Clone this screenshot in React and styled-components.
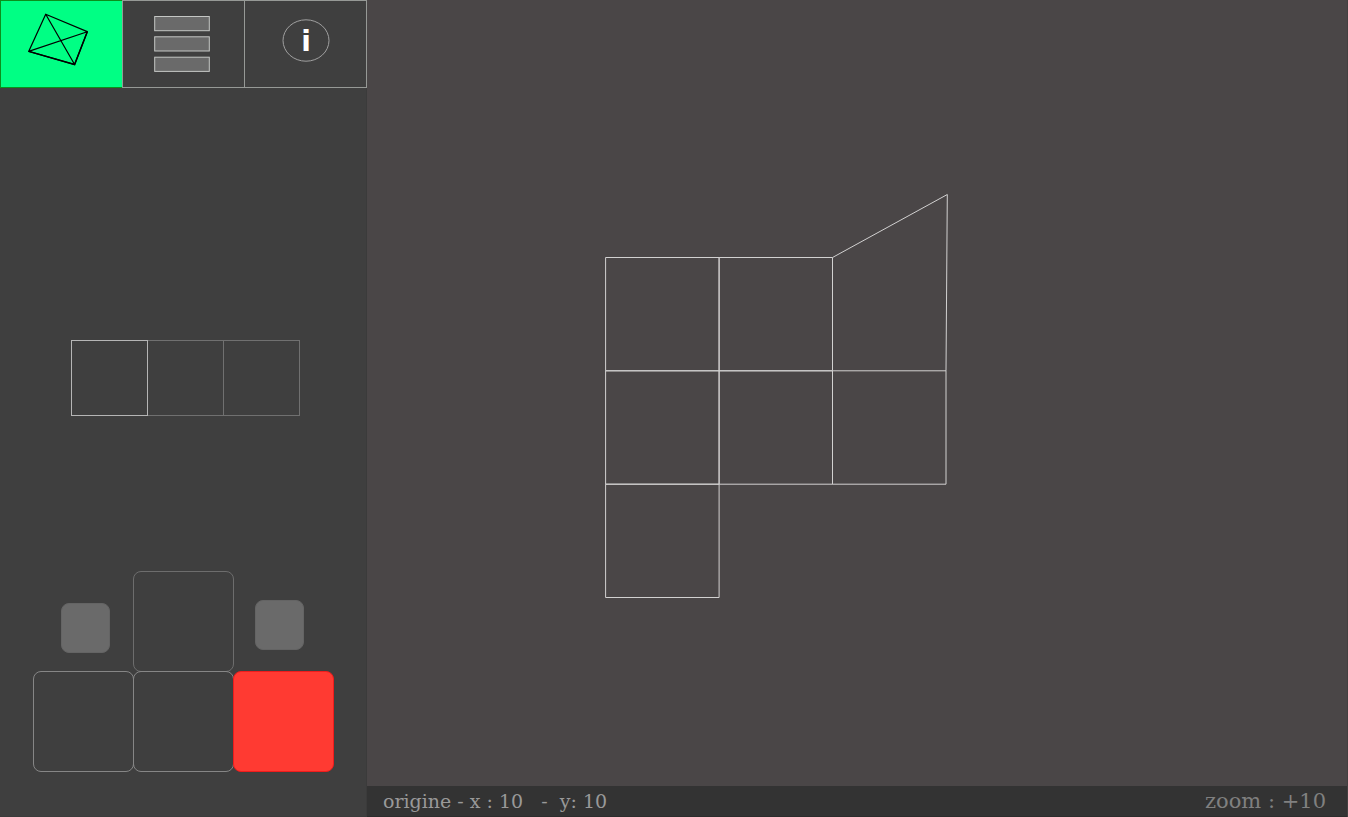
import React, { useState } from "react";
import styled, { createGlobalStyle } from "styled-components";

const GlobalStyle = createGlobalStyle`
  *, *::before, *::after { box-sizing: border-box; }
  body { margin: 0; background: #4a4647; }
  button { appearance: none; padding: 0; margin: 0; font: inherit; cursor: pointer; }
`;

const Page = styled.div`
  display: grid;
  grid-template-columns: 367px minmax(0, 1fr);
  min-height: 100vh;
  font-family: "DejaVu Serif", serif;
`;

const Sidebar = styled.aside`
  display: flex;
  flex-direction: column;
  align-items: center;
  background: #3f3f3f;
  border: 1px solid #3b3b3b;
  border-width: 0 1px 1px 0;
`;

const Tabs = styled.nav`
  align-self: stretch;
  display: grid;
  grid-template-columns: repeat(2, 122px) 1fr;
  height: 88px;
  margin-right: -1px;
`;

const Tab = styled.button`
  display: flex;
  align-items: center;
  justify-content: center;
  background: ${(p) => (p.$active ? "#00ff84" : "transparent")};
  border: 1px solid ${(p) => (p.$active ? "#0b8f1c" : "#969996")};
  border-right-width: ${(p) => (p.$last ? "1px" : "0")};
`;

const InfoLetter = styled.text`
  font-family: "DejaVu Sans", sans-serif;
  font-size: 28px;
  font-weight: 700;
  fill: #ffffff;
`;

const Spacer = styled.div`
  flex: ${(p) => p.$weight} 0 0;
`;

const Shapes = styled.div`
  display: flex;
  padding-left: 4px;
`;

const Shape = styled.button`
  width: ${(p) => (p.$selected ? "77px" : "76px")};
  height: 76px;
  background: transparent;
  border: 1px solid ${(p) => (p.$selected ? "#b5b5b5" : "#707070")};
  border-left-width: ${(p) => (p.$joined ? "0" : "1px")};
`;

const Keypad = styled.div`
  display: grid;
  grid-template-columns: repeat(3, 100px);
  grid-template-rows: repeat(2, 100px);
  margin-bottom: 45px;
`;

const Key = styled.button`
  width: 101px;
  height: 101px;
  border-radius: 8px;
  background: ${(p) => (p.$alert ? "#ff3a32" : "transparent")};
  border: 1px solid ${(p) => (p.$alert ? "#f01c1c" : p.$dim ? "#6d6d6d" : "#868686")};
`;

const SideCell = styled.div`
  display: flex;
  justify-content: ${(p) => (p.$end ? "flex-end" : "flex-start")};
  padding: ${(p) => (p.$end ? "32px 23px 0" : "29px 22px 0")};
`;

const SmallKey = styled.button`
  width: 49px;
  height: 50px;
  border: 1px solid #646464;
  border-radius: 8px;
  background: #6a6a6a;
`;

const Workspace = styled.main`
  display: flex;
  flex-direction: column;
  background: #4a4647;
  border-right: 1px solid #434040;
`;

const Canvas = styled.svg`
  flex: 1;
  width: 100%;
  min-height: 620px;
  display: block;
`;

const StatusBar = styled.footer`
  display: flex;
  align-items: center;
  justify-content: space-between;
  height: 31px;
  padding: 0 21px 0 16px;
  background: #333333;
  border-bottom: 1px solid #2c2c2c;
  line-height: 24px;
  white-space: pre;
`;

const Origin = styled.span`
  font-size: 19px;
  color: #999999;
`;

const Zoom = styled.span`
  font-size: 21px;
  color: #808080;
`;

function MeshIcon() {
  return (
    <svg width="121" height="86" viewBox="0 0 121 86" fill="none" stroke="#000000" strokeWidth="1.2" aria-hidden="true">
      <path d="M44.700 13.300L86.300 30.700L73.600 63.500L27.700 50.400Z M44.700 13.300L73.600 63.500 M27.700 50.400L86.300 30.700" />
      <path d="M86.300 30.700L73.600 63.500L27.700 50.400" strokeWidth="1.5" />
    </svg>
  );
}

function ListIcon() {
  return (
    <svg width="121" height="86" viewBox="0 0 121 86" fill="#6a6a6a" stroke="#c4c6c4" aria-hidden="true">
      <rect x="31.700" y="15.500" width="54.600" height="14.200" />
      <rect x="31.700" y="35.800" width="54.600" height="14.200" />
      <rect x="31.700" y="56.200" width="54.600" height="14.200" />
    </svg>
  );
}

function InfoIcon() {
  return (
    <svg width="121" height="86" viewBox="0 0 121 86" aria-hidden="true">
      <ellipse cx="61" cy="39.500" rx="23" ry="20.700" fill="none" stroke="#a0a0a0" />
      <InfoLetter x="61" y="50" textAnchor="middle">
        i
      </InfoLetter>
    </svg>
  );
}

const faces = [
  "238.600,257.500 352.100,257.500 352.100,370.800 238.600,370.800",
  "352.100,257.500 465.500,257.500 465.500,370.800 352.100,370.800",
  "238.600,370.800 352.100,370.800 352.100,484.200 238.600,484.200",
  "352.100,370.800 465.500,370.800 465.500,484.200 352.100,484.200",
  "465.500,370.800 579,370.800 579,484.200 465.500,484.200",
  "238.600,484.200 352.100,484.200 352.100,597.500 238.600,597.500",
];

export default function App() {
  const [tab, setTab] = useState("mesh");
  return (
    <>
      <GlobalStyle />
      <Page>
        <Sidebar>
          <Tabs aria-label="Panneaux">
            <Tab $active={tab === "mesh"} onClick={() => setTab("mesh")} aria-label="Formes">
              <MeshIcon />
            </Tab>
            <Tab $active={tab === "list"} onClick={() => setTab("list")} aria-label="Menu">
              <ListIcon />
            </Tab>
            <Tab $last $active={tab === "info"} onClick={() => setTab("info")} aria-label="Informations">
              <InfoIcon />
            </Tab>
          </Tabs>
          <Spacer $weight={252} />
          <Shapes>
            <Shape $selected aria-label="Forme 1" />
            <Shape $joined aria-label="Forme 2" />
            <Shape $joined aria-label="Forme 3" />
          </Shapes>
          <Spacer $weight={155} />
          <Keypad>
            <SideCell $end>
              <SmallKey aria-label="Tourner à gauche" />
            </SideCell>
            <Key $dim aria-label="Haut" />
            <SideCell>
              <SmallKey aria-label="Tourner à droite" />
            </SideCell>
            <Key aria-label="Gauche" />
            <Key aria-label="Bas" />
            <Key $alert aria-label="Droite" />
          </Keypad>
        </Sidebar>
        <Workspace>
          <Canvas fill="none" stroke="#d2d1d1" role="img" aria-label="Maillage">
            {faces.map((points) => (
              <polygon key={points} points={points} />
            ))}
            <polyline points="465.500,257.500 580.300,194.500 579,370.800" />
          </Canvas>
          <StatusBar>
            <Origin>{"origine - x : 10   -  y: 10"}</Origin>
            <Zoom>zoom : +10</Zoom>
          </StatusBar>
        </Workspace>
      </Page>
    </>
  );
}
